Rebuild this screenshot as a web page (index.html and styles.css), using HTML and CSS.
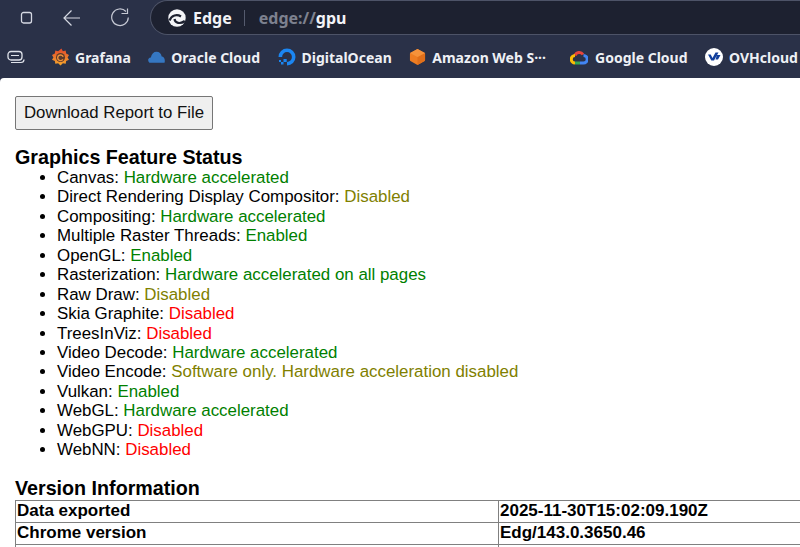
FILE: index.html
```html
<!DOCTYPE html>
<html lang="en">
<head>
	<meta charset="UTF-8">
	<title>edge://gpu</title>
	<link rel="stylesheet" href="styles.css">
</head>
<body>
	<div class="chrome">
		<div class="topbar">
			<svg class="tool tool-tab" width="16" height="16" viewBox="0 0 16 16"><rect x="2.5" y="2.5" width="10" height="10.5" rx="2" fill="none" stroke="#d5d8e2" stroke-width="1.3"/></svg>
			<svg class="tool tool-back" width="20" height="20" viewBox="0 0 20 20"><path d="M18 10H2M9.500 2.500 2 10l7.500 7.500" fill="none" stroke="#d5d8e2" stroke-width="1.200"/></svg>
			<svg class="tool tool-reload" width="20" height="20" viewBox="0 0 20 20"><path d="M16 3.500a8.300 8.300 0 1 0 2.300 6" fill="none" stroke="#c6c9d4" stroke-width="1.200"/><path d="M11.500 5.500h6V.5" fill="none" stroke="#c6c9d4" stroke-width="1.200"/></svg>
			<div class="address">
				<svg width="18" height="18" viewBox="0 0 18 18"><circle cx="9" cy="9" r="8.700" fill="#f4f5f8"/><path d="M1.500 11.500C3.500 6 9 5 13 7.500" fill="none" stroke="#1d2130" stroke-width="2.200"/><path d="M6.500 10C7 14 12 15.500 16.800 12" fill="none" stroke="#1d2130" stroke-width="2.200"/></svg>
				<span class="brand">Edge</span>
				<span class="divider"></span>
				<span class="url"><span class="url-dim">edge://</span>gpu</span>
			</div>
		</div>
		<div class="favbar">
			<svg class="tool" width="18" height="14" viewBox="0 0 18 14"><rect x="1" y="1.500" width="14" height="8.500" rx="3" fill="none" stroke="#dfe2ea" stroke-width="1.300"/><path d="M4 5.500h8M4 12.500h10c2 0 3-1 3-3" fill="none" stroke="#dfe2ea" stroke-width="1.200"/></svg>
			<span class="fav-sep"></span>
			<div class="fav">
				<svg width="17" height="18" viewBox="0 0 18 18"><defs><linearGradient id="graf" x1="0" y1="0" x2="0" y2="1"><stop offset="0" stop-color="#e2472b"/><stop offset="1" stop-color="#f6a92c"/></linearGradient></defs><path d="M10 0l1.500 3 3-1 .5 3.200L18 7l-1.500 2.500L18 12l-3 1.200-.5 3-3-.7L9 18l-2.500-2.500-3 .7-.5-3L0 12l1.500-2.500L0 7l3-1.800.5-3.200 3 1z" fill="url(#graf)"/><circle cx="9" cy="9.500" r="4.800" fill="#5b3a2c"/><path d="M11.500 11.500a3 3 0 1 1 .3-2.800" fill="none" stroke="#f0913a" stroke-width="1.500"/></svg>
				Grafana
			</div>
			<div class="fav">
				<svg width="17" height="12" viewBox="0 0 18 12"><path d="M1.500 12C-.500 10-.500 7 3 6.500 4 2.500 6 .500 9 .500c3 0 5 2 5.500 5 2.500 0 4 3 3 6.500z" fill="#3577c2"/></svg>
				Oracle Cloud
			</div>
			<div class="fav">
				<svg width="18" height="18" viewBox="0 0 18 18"><path d="M9 17.500v-3.600A4.900 4.900 0 1 0 4.100 9H.5A8.500 8.500 0 1 1 9 17.500z" fill="#1b86f2"/><path d="M5.500 11h3.200v3H5.500zM3 14h2.500v2.500H3zM1 12h2v2H1z" fill="#1b86f2"/></svg>
				DigitalOcean
			</div>
			<div class="fav fav-long">
				<svg width="17" height="18" viewBox="0 0 18 18"><path d="M9 .5l7.500 4.200c.5.300.5.500.5 1v6.600c0 .5 0 .8-.5 1L9 17.500l-7.500-4.200c-.5-.2-.5-.5-.5-1V5.700c0-.5 0-.7.5-1z" fill="#ee7d22"/><path d="M9 9l8-4.300v7.600c0 .5 0 .8-.5 1L9 17.500z" fill="#e06f1a"/><path d="M9 .5l8 4.200L9 9 1 4.700z" fill="#f5923a"/></svg>
				Amazon Web S···
			</div>
			<div class="fav fav-google">
				<svg width="18" height="16" viewBox="0 0 18 16" fill="none" stroke-width="3"><path d="M5 6.500A4.500 4.500 0 0 1 13 5.500" stroke="#e8453c"/><path d="M13.500 6.500A3.700 3.700 0 0 1 13.500 14H10" stroke="#4285f4"/><path d="M10 14H5" stroke="#34a853"/><path d="M5 14A3.700 3.700 0 0 1 5 6.500" stroke="#fbbc05"/></svg>
				Google Cloud
			</div>
			<div class="fav">
				<svg width="18" height="18" viewBox="0 0 18 18"><circle cx="9" cy="9" r="9" fill="#fff"/><path d="M3 6.500h2.700L7.500 10l3-5.500h3L9 12.500H6.300zM12 7h3.500l-2.500 4.500h-2.500z" fill="#123f9c"/></svg>
				OVHcloud
			</div>
		</div>
	</div>

	<div class="page">
		<button class="download" type="button">Download Report to File</button>

		<h3>Graphics Feature Status</h3>
		<ul>
			<li>Canvas: <span class="on">Hardware accelerated</span></li>
			<li>Direct Rendering Display Compositor: <span class="warn">Disabled</span></li>
			<li>Compositing: <span class="on">Hardware accelerated</span></li>
			<li>Multiple Raster Threads: <span class="on">Enabled</span></li>
			<li>OpenGL: <span class="on">Enabled</span></li>
			<li>Rasterization: <span class="on">Hardware accelerated on all pages</span></li>
			<li>Raw Draw: <span class="warn">Disabled</span></li>
			<li>Skia Graphite: <span class="off">Disabled</span></li>
			<li>TreesInViz: <span class="off">Disabled</span></li>
			<li>Video Decode: <span class="on">Hardware accelerated</span></li>
			<li>Video Encode: <span class="warn">Software only. Hardware acceleration disabled</span></li>
			<li>Vulkan: <span class="on">Enabled</span></li>
			<li>WebGL: <span class="on">Hardware accelerated</span></li>
			<li>WebGPU: <span class="off">Disabled</span></li>
			<li>WebNN: <span class="off">Disabled</span></li>
		</ul>

		<h3 class="version-title">Version Information</h3>
		<table>
			<tr><td>Data exported</td><td>2025-11-30T15:02:09.190Z</td></tr>
			<tr><td>Chrome version</td><td>Edg/143.0.3650.46</td></tr>
			<tr><td>&nbsp;</td><td>&nbsp;</td></tr>
		</table>
	</div>
</body>
</html>
```

FILE: styles.css
```css
html, body {
	margin: 0;
	height: 547px;
	overflow: hidden;
}

body {
	background: #2a3148;
	font-family: "Liberation Sans", Arial, sans-serif;
}

.chrome {
	height: 78px;
}

.topbar {
	display: flex;
	align-items: center;
	height: 35px;
	padding-left: 19px;
}

.tool {
	flex: none;
}

.tool-back {
	margin-left: 27px;
}

.tool-reload {
	margin-left: 28px;
}

.address {
	flex: 1;
	display: flex;
	align-items: center;
	height: 35px;
	margin-left: 20px;
	padding-left: 17px;
	background: #1d2130;
	border: 1px solid #4d5367;
	border-right: 0;
	border-radius: 18px 0 0 18px;
	box-sizing: border-box;
}

.brand {
	margin-left: 7px;
	font-family: "Noto Sans", sans-serif;
	font-size: 16px;
	font-weight: 700;
	color: #f2f3f7;
}

.divider {
	width: 1px;
	height: 16px;
	margin: 0 14px 0 12px;
	background: #555b6e;
}

.url {
	font-family: "Noto Sans", sans-serif;
	font-size: 16px;
	font-weight: 700;
	color: #f2f3f7;
}

.url-dim {
	color: #7d818f;
}

.favbar {
	display: flex;
	align-items: center;
	height: 43px;
	padding: 1px 0 0 7px;
	box-sizing: border-box;
}

.fav-sep {
	width: 1px;
	height: 18px;
	margin: 0 12px 0 15px;
	background: #454c63;
}

.fav {
	display: flex;
	align-items: center;
	gap: 6px;
	margin-right: 17.500px;
	font-family: "Noto Sans", sans-serif;
	font-size: 14px;
	font-weight: 700;
	color: #eef0f5;
	white-space: nowrap;
}

.fav-long {
	margin-right: 24px;
}

.fav-google {
	gap: 7px;
}

.page {
	height: 469px;
	padding: 18px 15px 0;
	background: #fff;
	border-radius: 4px 0 0 0;
	color: #000;
	overflow: hidden;
}

.download {
	display: block;
	width: 198px;
	height: 34px;
	padding: 0;
	font-family: "Liberation Sans", Arial, sans-serif;
	font-size: 16.800px;
	color: #111;
	background: #efefef;
	border: 1px solid #767676;
	border-radius: 2px;
}

h3 {
	margin: 16px 0 0;
	font-size: 19.700px;
	line-height: 22px;
	font-weight: bold;
}

ul {
	margin: 0;
	padding-left: 42px;
	font-size: 16.900px;
	line-height: 19.430px;
}

.on {
	color: #008000;
}

.warn {
	color: #808000;
}

.off {
	color: #ff0000;
}

.version-title {
	margin-top: 17px;
}

table {
	width: 830px;
	margin-top: 1px;
	border-collapse: collapse;
	table-layout: fixed;
}

td {
	height: 21px;
	padding: 0 0 0 1px;
	border: 1px solid #808080;
	font-size: 17px;
	line-height: 18px;
	font-weight: bold;
}

td:first-child {
	width: 481px;
}
```
